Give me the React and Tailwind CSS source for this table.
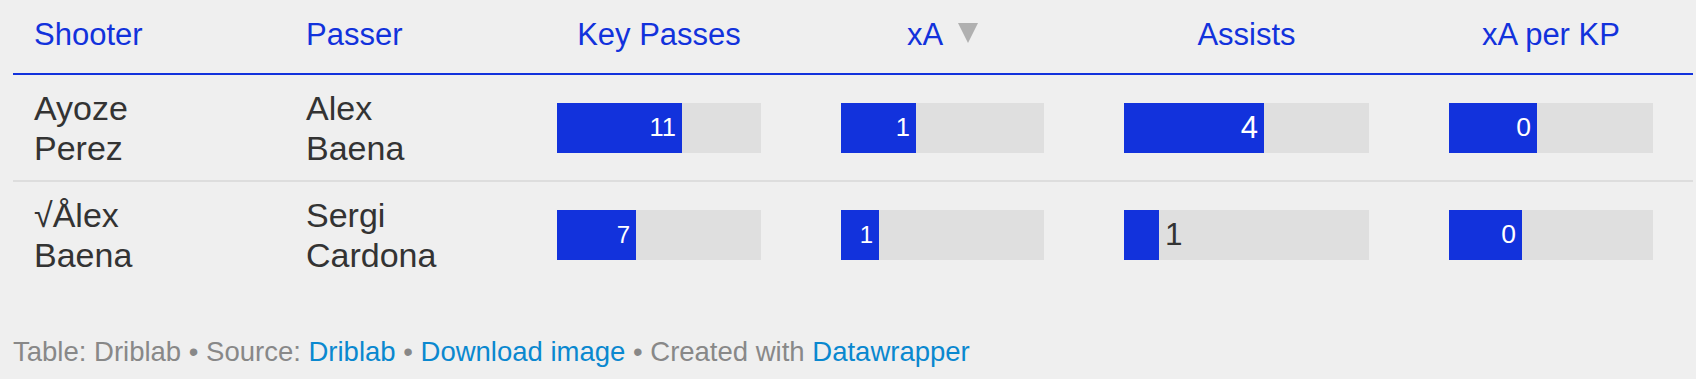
import React from 'react';

const columns = [
  { label: 'Key Passes', bar: 204 },
  { label: 'xA', bar: 203, sorted: true },
  { label: 'Assists', bar: 245 },
  { label: 'xA per KP', bar: 204 },
];

const rows = [
  {
    shooter: 'Ayoze Perez',
    passer: 'Alex Baena',
    border: true,
    cells: [
      { value: '11', fill: 125, size: 'text-[25.5px]' },
      { value: '1', fill: 75, size: 'text-[25.5px]' },
      { value: '4', fill: 140, size: 'text-[31px]' },
      { value: '0', fill: 88, size: 'text-[26.5px]' },
    ],
  },
  {
    shooter: '√Ålex Baena',
    passer: 'Sergi Cardona',
    border: false,
    cells: [
      { value: '7', fill: 79, size: 'text-[24px]' },
      { value: '1', fill: 38, size: 'text-[24px]' },
      { value: '1', fill: 35, size: 'text-[31.5px]', outside: true },
      { value: '0', fill: 73, size: 'text-[26.5px]' },
    ],
  },
];

const gridCols = 'grid grid-cols-[272px_232px_284px_283px_325px_284px]';

const Bar = ({ width, fill, value, size, outside }) => (
  <div className="flex h-[50px] bg-[#dfdfdf]" style={{ width }}>
    <div
      className="flex h-full items-center justify-end bg-[#1232dc] pr-1.5 text-white"
      style={{ width: fill }}
    >
      {!outside && <span className={`leading-none ${size}`}>{value}</span>}
    </div>
    {outside && (
      <span className={`self-center pl-1.5 leading-none text-[#333] ${size}`}>{value}</span>
    )}
  </div>
);

const App = () => {
  return (
    <div className="min-h-screen bg-[#efefef] pl-[13px] font-['Liberation_Sans',Arial,sans-serif]">
      <div className="w-[1680px]">
        {/* header */}
        <div
          className={`${gridCols} border-b-2 border-[#1232dc] pt-[17px] pb-[20px] text-[31px] leading-[36px] text-[#1232dc]`}
        >
          <div className="pl-[21px]">Shooter</div>
          <div className="pl-[21px]">Passer</div>
          {columns.map(col => (
            <div key={col.label} className="flex items-center justify-center">
              <span>{col.label}</span>
              {col.sorted && (
                <svg className="ml-[15px] mb-[5px]" width="20" height="20" viewBox="0 0 20 20">
                  <polygon points="0,0 20,0 10,20" fill="#b0b0b0" />
                </svg>
              )}
            </div>
          ))}
        </div>

        {/* body */}
        {rows.map((row, i) => (
          <div
            key={i}
            className={`${gridCols} h-[105px] items-center text-[34px] leading-[40px] text-[#333] ${
              row.border ? 'box-content border-b-2 border-[#dddddd]' : ''
            }`}
          >
            <div className="w-min pl-[21px]">{row.shooter}</div>
            <div className="w-min pl-[21px]">{row.passer}</div>
            {row.cells.map((cell, j) => (
              <div key={j} className="flex justify-center">
                <Bar width={columns[j].bar} {...cell} />
              </div>
            ))}
          </div>
        ))}
      </div>

      {/* footer */}
      <div className="mt-[49px] text-[27.5px] leading-[32px] text-[#888]">
        Table: Driblab • Source: <span className="text-[#0a88cf]">Driblab</span> •{' '}
        <span className="text-[#0a88cf]">Download image</span> • Created with{' '}
        <span className="text-[#0a88cf]">Datawrapper</span>
      </div>
    </div>
  );
};

export default App;
